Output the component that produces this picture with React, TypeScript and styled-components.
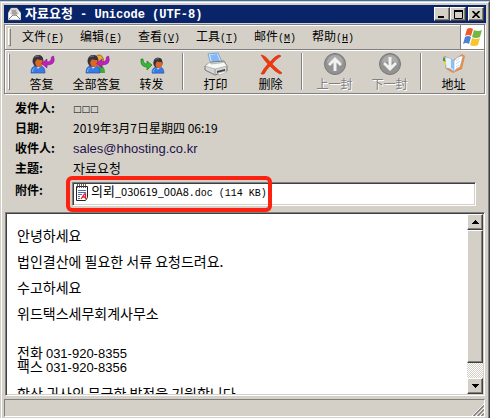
import React from 'react';
import styled, { createGlobalStyle, css } from 'styled-components';

const face = '#d4d0c8';
const shade = '#808080';
const dark = '#404040';
const ui = '"Noto Sans CJK SC", sans-serif';
const korean = '"Liberation Sans", "Noto Sans CJK KR", sans-serif';

const Global = createGlobalStyle`
  * { box-sizing: border-box; }
  body { margin: 0; background: #3a6ea5; }
  button { font: inherit; color: inherit; padding: 0; margin: 0; border: 0; background: none; }
  svg { display: block; flex: none; }
`;

const raised = css`
  background: ${face};
  border: 1px solid;
  border-color: #fff ${dark} ${dark} #fff;
  box-shadow: inset -1px -1px ${shade};
`;

const Desktop = styled.div`
  display: flex;
  height: 100vh;
  padding-top: 1px;
  background: #3a6ea5;
  font: 12px/16px ${ui};
  color: #000;
`;

const Window = styled.main`
  flex: 1;
  min-width: 0;
  display: flex;
  background: ${face};
  border: 1px solid ${face};
  border-right-color: ${dark};
  border-bottom: 0;
`;

const Frame = styled.div`
  flex: 1;
  min-width: 0;
  display: flex;
  flex-direction: column;
  border: 1px solid #fff;
  border-right-color: ${shade};
  border-bottom: 0;
  padding: 2px 2px 1px;
`;

const TitleBar = styled.header`
  display: flex;
  align-items: center;
  height: 18px;
  padding: 0 2px 0 4px;
  background: #0a246a;
  color: #fff;
`;

const Title = styled.h1`
  flex: 1;
  margin: 0 0 0 4px;
  font: bold 12px/18px "Liberation Mono", "Noto Sans CJK KR", monospace;
  white-space: pre;
`;

const Hangul = styled.span`
  font-family: "Noto Sans CJK KR", sans-serif;
  font-size: 13px;
`;

const CaptionButton = styled.button<{ $gap?: boolean }>`
  && { ${raised} }
  width: 16px;
  height: 14px;
  margin-left: ${(p) => (p.$gap ? 2 : 0)}px;
  display: grid;
  place-items: center;
`;

const Rebar = styled.div`
  margin: 1px 1px 1px 0;
  border: 1px solid ${shade};
  box-shadow: 1px 1px #fff, inset 1px 1px #fff;
`;

const MenuBar = styled.nav`
  display: flex;
  align-items: center;
  height: 24px;
  padding-left: 3px;
`;

const Grip = styled.div`
  align-self: stretch;
  width: 3px;
  margin: 3px 0;
  border: 1px solid;
  border-color: #fff ${shade} ${shade} #fff;
`;

const MenuButton = styled.button`
  width: 58px;
  height: 20px;
  padding-left: 2px;
  white-space: nowrap;
`;

const Mono = styled.span`
  font-family: "Liberation Mono", monospace;
  font-size: 10px;
`;

const Menus = styled.div`
  flex: 1;
  display: flex;
  padding-left: 2px;
`;

const Brand = styled.div`
  display: grid;
  place-items: center;
  width: 24px;
  height: 24px;
  background: #fff;
  border-left: 1px solid ${shade};
`;

const ToolBar = styled.div`
  display: flex;
  height: 44px;
  padding: 0 0 0 3px;
  border-top: 1px solid ${shade};
  box-shadow: inset 0 1px #fff;
`;

const ToolButton = styled.button`
  width: 55px;
  padding-top: 3px;
  display: flex;
  flex-direction: column;
  align-items: center;
  gap: 1px;
  line-height: 16px;
  white-space: nowrap;
  &:disabled { color: ${shade}; text-shadow: 1px 1px #fff; }
`;

const IconSlot = styled.span`
  display: flex;
  align-items: center;
  justify-content: center;
  height: 22px;
`;

const ToolGroup = styled.div`
  display: flex;
  padding: 0 3px 0 4px;
`;

const Separator = styled.div`
  width: 2px;
  margin: 3px 0;
  border-left: 1px solid ${shade};
  border-right: 1px solid #fff;
`;

const Headers = styled.dl`
  display: grid;
  grid-template-columns: 57px 1fr;
  grid-template-rows: repeat(4, 20px) 28px;
  align-items: center;
  margin: 3px 10px 6px 11px;
`;

const Label = styled.dt`
  font-weight: bold;
  white-space: nowrap;
`;

const Value = styled.dd`
  margin: 0 0 0 1px;
  white-space: nowrap;
`;

const Digits = styled.span`
  font-size: 11px;
`;

const Unknown = styled.span`
  font: 9px/16px "DejaVu Sans", sans-serif;
`;

const Address = styled.span`
  font: 13px/16px "Liberation Sans", sans-serif;
  color: #24104a;
`;

const AttachLabel = styled(Label)`
  align-self: start;
  margin-top: 4px;
`;

const AttachCell = styled.dd`
  position: relative;
  align-self: start;
  margin: 4px 0 0;
`;

const AttachBox = styled.div`
  height: 24px;
  background: #fff;
  border: 1px solid;
  border-color: ${shade} #fff #fff ${shade};
  box-shadow: inset 1px 1px ${dark}, inset -1px -1px ${face};
  padding: 1px 2px;
`;

const Attachment = styled.button`
  display: flex;
  align-items: flex-start;
  gap: 2px;
  line-height: 14px;
  white-space: pre;
`;

const Highlight = styled.div`
  position: absolute;
  left: -6px;
  top: -6px;
  width: 206px;
  height: 36px;
  border: 4px solid #fc2212;
  border-radius: 6px;
  pointer-events: none;
`;

const Message = styled.section`
  flex: 1;
  min-height: 0;
  display: flex;
  margin: 0 1px;
  background: #fff;
  border: 1px solid;
  border-color: ${shade} #fff #fff ${shade};
  box-shadow: inset 1px 1px ${dark}, inset -1px -1px ${face};
  padding: 1px;
`;

const Letter = styled.article`
  flex: 1;
  overflow: hidden;
  padding: 15px 10px 0;
  font: 14px/13px "Noto Sans CJK KR", sans-serif;
  p { margin: 0 0 13px; white-space: nowrap; }
`;

const Phone = styled.span`
  font: 13px/13px ${korean};
`;

const ScrollBar = styled.div`
  width: 16px;
  display: flex;
  flex-direction: column;
  background: repeating-conic-gradient(#fff 0 25%, ${face} 0 50%) 0 0 / 2px 2px;
`;

const ScrollButton = styled.button`
  && { ${raised} }
  height: 16px;
  display: grid;
  place-items: center;
`;

const Track = styled.div`
  flex: 1;
`;

const Thumb = styled.div`
  ${raised}
  height: 90%;
`;

const StatusBar = styled.footer`
  display: flex;
  justify-content: flex-end;
  align-items: flex-end;
  height: 18px;
  margin: 3px 1px 0 0;
  border: 1px solid;
  border-color: ${shade} #fff #fff ${shade};
`;

const Person = ({ x = 0 }: { x?: number }) => (
  <g transform={`translate(${x} 0)`}>
    <path d="M0 19q0-7 5-7h4q5 0 5 7z" fill="#397be5" stroke="#2450a8" strokeWidth=".7" />
    <path d="M5 12l2 3 3-3-1-2H5z" fill="#b9d8ff" />
    <ellipse cx="7" cy="7" rx="5.500" ry="6" fill="#35343b" />
    <ellipse cx="8" cy="8.500" rx="3.800" ry="4.500" fill="#df6622" />
    <path d="M2.500 8Q2 1 7 1q5 0 5 5-5 0-6-1-1 3-3.500 3z" fill="#34343d" />
    <path d="M4 3q2-1.500 4-.8" stroke="#77777f" fill="none" />
    <path d="M1.500 18q0-3 2-4" stroke="#86b8ff" fill="none" />
  </g>
);

const purpleArrow = 'M20.500 2q3 9-6.500 9v3l-5.500-4.500L14 5v3q4.500 0 4.500-5z';

const ReplyIcon = () => (
  <svg width="26" height="20" viewBox="0 0 26 20">
    <Person x={2} />
    <path transform="translate(4 0)" d={purpleArrow} fill="#bd22bd" stroke="#85128e" strokeWidth=".6" />
  </svg>
);

const ReplyAllIcon = () => (
  <svg width="26" height="20" viewBox="0 0 26 20">
    <path d="M12 19q0-7 4-7h1q4 0 4 7z" fill="#3bac3a" />
    <ellipse cx="15" cy="6.500" rx="4.500" ry="5.500" fill="#e8a936" stroke="#a36818" />
    <Person x={2} />
    <path transform="translate(4 0)" d={purpleArrow} fill="#bd22bd" stroke="#85128e" strokeWidth=".6" />
  </svg>
);

const ForwardIcon = () => (
  <svg width="26" height="20" viewBox="0 0 26 20">
    <g transform="translate(13 3) scale(.85)"><Person /></g>
    <path d="M2 5q-1 8 6 8v3l5-5-5-4v3q-4 0-4-5z" fill="#39b837" stroke="#187c22" strokeWidth=".7" />
  </svg>
);

const PrintIcon = () => (
  <svg width="26" height="24" viewBox="0 0 26 24">
    <path d="M5 2l10-1 4 9-11 2z" fill="#dceeff" stroke="#739fd5" />
    <path d="M7 3l7-1 3 7-8 1z" fill="#83b8f6" />
    <path d="M2 14l6-4 13-1 3 5v5l-12 4-10-5z" fill="#d6d6d4" stroke="#777" />
    <path d="M2 14l10 3 12-3-3-4-4 1-9 1-1-2z" fill="#f8f8f7" stroke="#999" strokeWidth=".6" />
    <path d="M12 17v6" stroke="#999" />
    <path d="M14 19l8-2v2l-8 2z" fill="#454545" />
    <path d="M15 21l8-2 1 1-8 3z" fill="#fff" stroke="#999" strokeWidth=".5" />
  </svg>
);

const DeleteIcon = () => (
  <svg width="24" height="22" viewBox="0 0 24 22">
    <path d="M2 2q4 0 9 7 5-6 9-7l2 1q-5 3-9 8 5 5 10 9l-2 1q-6-3-10-8-4 4-6 8H2q3-6 7-10-4-4-7-9z" fill="#f03a0c" stroke="#c92806" strokeWidth=".6" />
  </svg>
);

const RoundIcon = ({ down = false }: { down?: boolean }) => (
  <svg width="24" height="24" viewBox="0 0 24 24">
    <circle cx="12" cy="12" r="10.500" fill="#929292" stroke="#777" />
    <path d="M4 11a8 8 0 0 1 16 0q-8-3-16 0z" fill="#aaa" />
    <path transform={down ? 'rotate(180 12 12)' : undefined} d="M12 5l7 7-2 2-3.500-3.500V19h-3v-8.500L7 14l-2-2z" fill="#f1f1ef" />
  </svg>
);

const BookIcon = () => (
  <svg width="24" height="22" viewBox="0 0 24 22">
    <path d="M1 4l2-1 8 4 9-6 3 2-3 13-9 4-7-4z" fill="#ed8a3e" />
    <path d="M3 4q5 0 9 4v11q-3-4-8-4z" fill="#e5f3ff" stroke="#77aee4" strokeWidth=".6" />
    <path d="M12 8q3-5 9-5l-3 11q-4 1-6 5z" fill="#fff" stroke="#77aee4" strokeWidth=".6" />
    <path d="M9 6q2 1 3 3v9q-1-3-3-3z" fill="#8abef0" />
    <path d="M14 8l4-3M14 11l4-3M14 14l3-2" stroke="#a6c9ea" strokeWidth=".7" />
    <path d="M1 5h2v3H1z" fill="#3a9d48" />
    <path d="M2 9h2v3H2z" fill="#f4d427" />
  </svg>
);

const WindowsLogo = () => (
  <svg width="20" height="20" viewBox="0 0 20 20">
    <path d="M4 2q3-2 6 0L8 9Q5 7 2 9z" fill="#f05a28" />
    <path d="M11 3q4 2 8 0l-2 7q-4 2-8 0z" fill="#73b843" />
    <path d="M2 10q3-2 6 0l-2 7q-3-2-6 0z" fill="#4b82d6" />
    <path d="M9 11q4 2 8 0l-2 7q-4 2-8 0z" fill="#f7c52d" />
  </svg>
);

const MailIcon = () => (
  <svg width="13" height="14" viewBox="0 0 13 14">
    <path d="M0 6l3-5h6l4 5v7H0z" fill="#fff" stroke="#777" strokeWidth=".6" />
    <path d="M3 2h6l2 5-4 2-5-2z" fill="#d4d0c8" />
    <path d="M4 4h4M4 6h5M1 12l4-4h3l4 4" stroke="#777" fill="none" />
  </svg>
);

const DocIcon = () => (
  <svg width="14" height="17" viewBox="0 0 14 17">
    <path d="M1.500 2.500h11v11l-2 3h-9z" fill="#fff" stroke="#222" />
    <path d="M2.500 0v4M4.500 0v4M6.500 0v4M8.500 0v4M10.500 0v4" stroke="#444" strokeWidth=".8" />
    <path d="M3 6.500h8M3 8.500h8M3 10.500h4M3 12.500h2M3 14.500h2" stroke="#2546a8" strokeWidth=".8" />
    <path d="M6 15l3.500-5h1v5M7.500 13h3" stroke="#e3202b" strokeWidth="1.300" fill="none" />
  </svg>
);

const ArrowGlyph = ({ down = false }: { down?: boolean }) => (
  <svg width="7" height="4" viewBox="0 0 7 4" shapeRendering="crispEdges">
    <path d={down ? 'M0 0h7L3.500 4z' : 'M0 4h7L3.500 0z'} />
  </svg>
);

const menus = [
  ['文件', 'F'], ['编辑', 'E'], ['查看', 'V'], ['工具', 'T'], ['邮件', 'M'], ['帮助', 'H'],
];

type ToolProps = { icon: React.ReactNode; label: string; disabled?: boolean };

const Tool = ({ icon, label, disabled }: ToolProps) => (
  <ToolButton disabled={disabled}>
    <IconSlot>{icon}</IconSlot>
    {label}
  </ToolButton>
);

export default function App() {
  return (
    <Desktop>
      <Global />
      <Window>
        <Frame>
          <TitleBar>
            <MailIcon />
            <Title><Hangul>자료요청</Hangul> - Unicode (UTF-8)</Title>
            <CaptionButton aria-label="Minimize">
              <svg width="8" height="8"><path d="M0 6h6v2H0z" /></svg>
            </CaptionButton>
            <CaptionButton aria-label="Maximize">
              <svg width="9" height="9"><path d="M.5 1v7.500h8V1" fill="none" stroke="#000" /><path d="M0 0h9v2H0z" /></svg>
            </CaptionButton>
            <CaptionButton $gap aria-label="Close">
              <svg width="8" height="7"><path d="M.5 0l7 7M7.500 0l-7 7" stroke="#000" strokeWidth="1.600" /></svg>
            </CaptionButton>
          </TitleBar>

          <Rebar>
            <MenuBar>
              <Grip />
              <Menus>
                {menus.map(([name, key]) => (
                  <MenuButton key={key}>{name}<Mono>(<u>{key}</u>)</Mono></MenuButton>
                ))}
              </Menus>
              <Brand><WindowsLogo /></Brand>
            </MenuBar>
            <ToolBar>
              <Grip />
              <ToolGroup>
                <Tool icon={<ReplyIcon />} label="答复" />
                <Tool icon={<ReplyAllIcon />} label="全部答复" />
                <Tool icon={<ForwardIcon />} label="转发" />
              </ToolGroup>
              <Separator />
              <ToolGroup>
                <Tool icon={<PrintIcon />} label="打印" />
                <Tool icon={<DeleteIcon />} label="删除" />
              </ToolGroup>
              <Separator />
              <ToolGroup>
                <Tool disabled icon={<RoundIcon />} label="上一封" />
                <Tool disabled icon={<RoundIcon down />} label="下一封" />
              </ToolGroup>
              <Separator />
              <ToolGroup>
                <Tool icon={<BookIcon />} label="地址" />
              </ToolGroup>
            </ToolBar>
          </Rebar>

          <Headers>
            <Label>发件人:</Label>
            <Value><Unknown>□□□</Unknown></Value>
            <Label>日期:</Label>
            <Value>2019年3月7日星期四 06:19</Value>
            <Label>收件人:</Label>
            <Value><Address>sales@hhosting.co.kr</Address></Value>
            <Label>主题:</Label>
            <Value><Hangul>자료요청</Hangul></Value>
            <AttachLabel>附件:</AttachLabel>
            <AttachCell>
              <AttachBox>
                <Attachment>
                  <DocIcon />
                  <span><Hangul>의뢰</Hangul><Digits>_030619_00A8</Digits><Mono>.doc (114 KB)</Mono></span>
                </Attachment>
              </AttachBox>
              <Highlight />
            </AttachCell>
          </Headers>

          <Message>
            <Letter>
              <p>안녕하세요</p>
              <p>법인결산에 필요한 서류 요청드려요.</p>
              <p>수고하세요</p>
              <p>위드택스세무회계사무소</p>
              <br />
              <p>전화 <Phone>031-920-8355</Phone><br />팩스 <Phone>031-920-8356</Phone></p>
              <p>항상 귀사의 무궁한 발전을 기원합니다</p>
            </Letter>
            <ScrollBar>
              <ScrollButton aria-label="Scroll up"><ArrowGlyph /></ScrollButton>
              <Track><Thumb /></Track>
              <ScrollButton aria-label="Scroll down"><ArrowGlyph down /></ScrollButton>
            </ScrollBar>
          </Message>

          <StatusBar>
            <svg width="12" height="12" viewBox="0 0 12 12">
              <path d="M0 12L12 0M4 12l8-8M8 12l4-4" stroke="#fff" />
              <path d="M1.500 12L12 1.500M5.500 12L12 5.500M9.500 12L12 9.500" stroke="#808080" strokeWidth="1.500" />
            </svg>
          </StatusBar>
        </Frame>
      </Window>
    </Desktop>
  );
}
